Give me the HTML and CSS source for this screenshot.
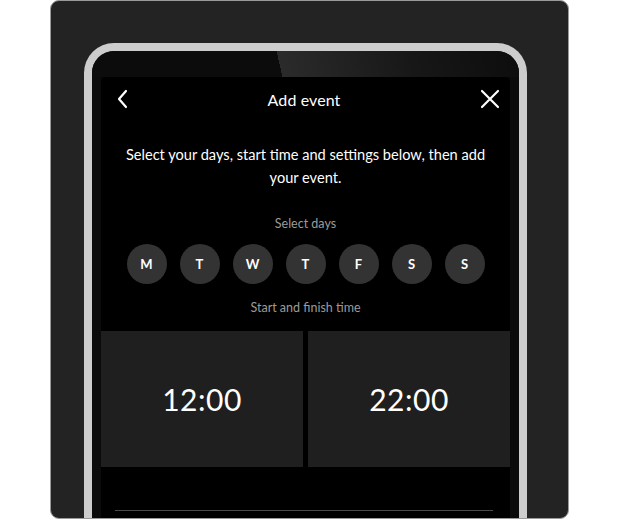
FILE: index.html
```html
<!DOCTYPE html>
<html>
<head>
<meta charset="utf-8">
<link rel="stylesheet" href="styles.css">
</head>
<body>
<div class="panel">
  <div class="phone">
    <div class="bezel"></div>
    <div class="screen">
      <div class="header">
        <svg class="icon-back" width="12" height="20" viewBox="0 0 12 20"><polyline points="10,2 3,10 10,18" fill="none" stroke="#fff" stroke-width="2.2" stroke-linecap="round" stroke-linejoin="round"/></svg>
        <div class="title">Add event</div>
        <svg class="icon-close" width="20" height="20" viewBox="0 0 20 20"><path d="M2 2 L18 18 M18 2 L2 18" fill="none" stroke="#fff" stroke-width="2.2" stroke-linecap="round"/></svg>
      </div>
      <p class="intro">Select your days, start time and settings below, then add your event.</p>
      <div class="label">Select days</div>
      <div class="days">
        <div class="day">M</div>
        <div class="day">T</div>
        <div class="day">W</div>
        <div class="day">T</div>
        <div class="day">F</div>
        <div class="day">S</div>
        <div class="day">S</div>
      </div>
      <div class="label label-time">Start and finish time</div>
      <div class="times">
        <div class="time">12:00</div>
        <div class="time">22:00</div>
      </div>
      <div class="divider"></div>
    </div>
  </div>
</div>
</body>
</html>
```

FILE: styles.css
```css
html, body {
  margin: 0;
  padding: 0;
  background: #ffffff;
}
body {
  font-family: "Lato", "Noto Sans", sans-serif;
  width: 620px;
  height: 520px;
  overflow: hidden;
}
.panel {
  box-sizing: border-box;
  margin-left: 50px;
  width: 519px;
  height: 519px;
  background: #232323;
  border: 1px solid #9a9a9a;
  border-radius: 9px;
  padding: 42px 0 0 33px;
  overflow: hidden;
}
.phone {
  box-sizing: border-box;
  width: 443px;
  height: 520px;
  border: 8px solid #cdcdcd;
  border-bottom: none;
  border-radius: 30px 30px 0 0;
  background: #0b0b0b;
  padding: 0 9px;
  overflow: hidden;
}
.bezel {
  height: 26px;
  margin: 0 -9px;
  background: linear-gradient(77deg, #0c0c0c 0 44%, #2b2b2b 44%, #222 58%, #171717 75%, #0d0d0d 100%);
}
.screen {
  background: #000;
  border-radius: 4px 4px 0 0;
  color: #fff;
  height: 460px;
  display: flex;
  flex-direction: column;
}
.header {
  height: 44px;
  display: flex;
  align-items: center;
  justify-content: space-between;
  padding: 0 10px 0 15px;
}
.title {
  font-size: 16px;
  font-weight: 400;
  letter-spacing: 0.1px;
}
.intro {
  margin: 22px 0 0;
  padding: 0 10px;
  font-size: 14.6px;
  line-height: 23px;
  text-align: center;
}
.label {
  margin-top: 26px;
  font-size: 12.5px;
  line-height: 18px;
  color: #9b9b9b;
  text-align: center;
}
.days {
  margin-top: 11px;
  display: flex;
  justify-content: center;
  gap: 13px;
}
.day {
  width: 40px;
  height: 40px;
  border-radius: 50%;
  background: #333333;
  display: flex;
  align-items: center;
  justify-content: center;
  font-size: 13px;
  font-weight: 700;
}
.label-time {
  margin-top: 15px;
}
.times {
  margin-top: 14px;
  display: grid;
  grid-template-columns: 1fr 1fr;
  gap: 5px;
}
.time {
  height: 136px;
  background: #1f1f1f;
  display: flex;
  align-items: center;
  justify-content: center;
  font-size: 30px;
  font-weight: 400;
  letter-spacing: 0.5px;
}
.divider {
  margin: 43px 17px 0 14px;
  height: 1px;
  background: #4a4a4a;
}
```
